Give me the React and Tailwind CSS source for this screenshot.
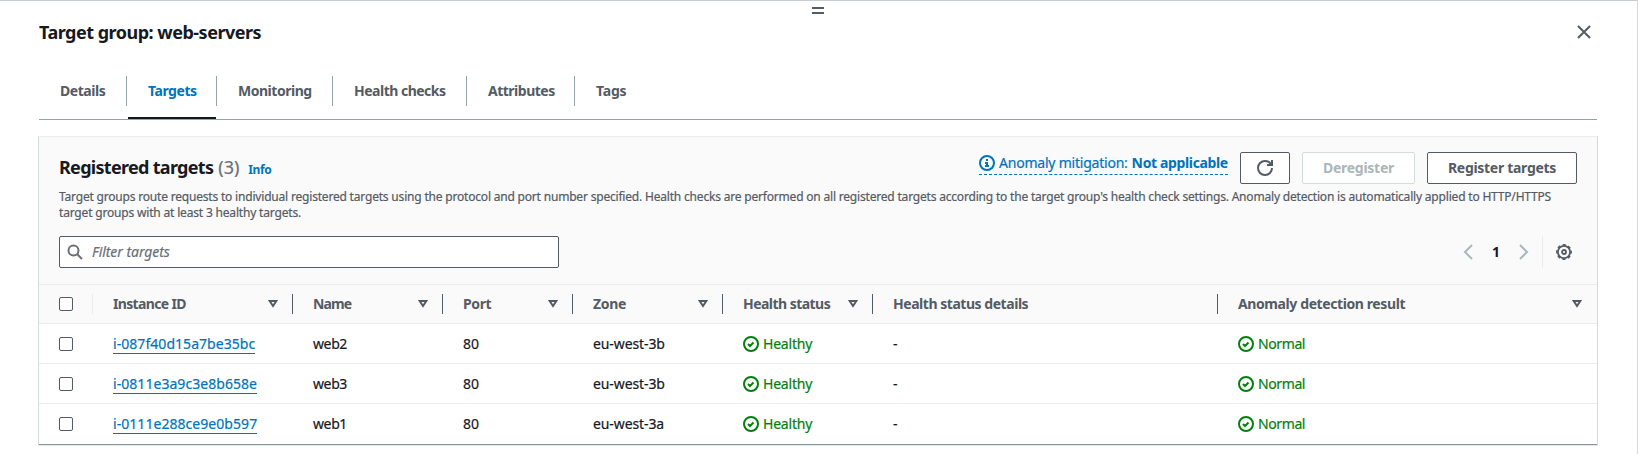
function Icon({ className = '', children }) {
  return (
    <svg viewBox="0 0 16 16" className={`size-4 shrink-0 ${className}`} fill="none" stroke="currentColor" strokeWidth="2" aria-hidden="true">
      {children}
    </svg>
  );
}

const CloseIcon = () => (
  <Icon className="text-[#545b64]">
    <path d="m2 2 12 12M14 2 2 14" />
  </Icon>
);

const RefreshIcon = () => (
  <Icon>
    <path d="M10 5h5V0" />
    <path d="M15 8a6.957 6.957 0 0 1-7 7 6.957 6.957 0 0 1-7-7 6.957 6.957 0 0 1 7-7 6.87 6.87 0 0 1 6.3 4" />
  </Icon>
);

const SearchIcon = () => (
  <Icon className="text-[#687078]">
    <circle cx="6.5" cy="6.5" r="5" />
    <path d="m15 15-5-5" />
  </Icon>
);

const InfoIcon = () => (
  <Icon>
    <circle cx="8" cy="8" r="7" />
    <path d="M8 11V8H6M10 11H6M8 6V4" />
  </Icon>
);

const CheckIcon = () => (
  <Icon>
    <circle cx="8" cy="8" r="7" />
    <path d="m5 8 2 2 3.5-3.5" />
  </Icon>
);

const GearIcon = () => (
  <Icon className="text-[#545b64]">
    <circle cx="8" cy="8" r="6.1" strokeWidth="1.8" />
    <circle cx="8" cy="8" r="7.2" strokeWidth="1.5" strokeDasharray="3.2 2.455" strokeDashoffset="1.6" />
    <circle cx="8" cy="8" r="2" strokeWidth="1.8" />
  </Icon>
);

const SortIcon = () => (
  <Icon className="text-[#545b64]">
    <path d="M4.7 5h6.6L8 10Z" />
  </Icon>
);

const TABS = [
  { label: 'Details', cell: 'w-[88px]', track: 'tracking-[-0.46px]' },
  { label: 'Targets', cell: 'w-[90px]', track: 'tracking-[-0.45px]', active: true },
  { label: 'Monitoring', cell: 'w-[116px]', track: 'tracking-[-0.48px]' },
  { label: 'Health checks', cell: 'w-[134px]', track: 'tracking-[-0.5px]' },
  { label: 'Attributes', cell: 'w-[108px]', track: 'tracking-[-0.5px]' },
  { label: 'Tags', cell: 'w-[75px]', track: 'tracking-[-0.2px]', last: true },
];

const COLUMNS = [
  { label: 'Instance ID', track: 'tracking-[-0.65px]', sortable: true },
  { label: 'Name', track: 'tracking-[-0.85px]', sortable: true },
  { label: 'Port', track: 'tracking-[-0.4px]', sortable: true },
  { label: 'Zone', track: 'tracking-[-0.33px]', sortable: true },
  { label: 'Health status', track: 'tracking-[-0.54px]', sortable: true },
  { label: 'Health status details', track: 'tracking-[-0.46px]' },
  { label: 'Anomaly detection result', track: 'tracking-[-0.4px]', sortable: true, last: true },
];

const ROWS = [
  { id: 'i-087f40d15a7be35bc', name: 'web2', zone: 'eu-west-3b' },
  { id: 'i-0811e3a9c3e8b658e', name: 'web3', zone: 'eu-west-3b' },
  { id: 'i-0111e288ce9e0b597', name: 'web1', zone: 'eu-west-3a' },
];

const GRID = 'grid grid-cols-[54px_200px_150px_130px_150px_150px_345px_1fr] items-center';

const Checkbox = () => (
  <span className="ml-5 block size-[14px] rounded-[2px] border border-[#545b64] bg-white" />
);

function Status({ label, track }) {
  return (
    <div className="flex items-center gap-1 pl-5 text-[#037f0c]">
      <CheckIcon />
      <span className={track}>{label}</span>
    </div>
  );
}

function Tabs() {
  return (
    <nav className="flex h-[53px] w-[1558px] border-b border-[#95a5a6] text-sm leading-[22px] font-bold text-[#545b64]">
      {TABS.map((t) => (
        <div key={t.label} className={`relative flex h-full items-start ${t.cell}`}>
          <div
            className={`mt-[9px] flex h-[30px] w-full items-center pl-[21px] ${t.last ? '' : 'border-r border-[#95a5a6]'} ${t.active ? 'text-[#0073bb]' : ''}`}
          >
            <span className={`whitespace-nowrap ${t.track}`}>{t.label}</span>
          </div>
          {t.active && <span className="absolute bottom-0 left-[1px] h-[2px] w-[88px] bg-[#16191f]" />}
        </div>
      ))}
    </nav>
  );
}

function PanelHeader() {
  return (
    <header className="bg-[#fafafa] px-5">
      <div className="flex h-[47px] items-start justify-between pt-[15px]">
        <h2 className="flex items-baseline pt-1 text-lg leading-[22px] font-bold text-[#16191f]">
          <span className="tracking-[-0.7px]">Registered targets</span>
          <span className="ml-[5px] font-normal text-[#687078] [-webkit-text-stroke:0.2px]">(3)</span>
          <a className="ml-[9px] text-xs font-bold tracking-[-0.4px] text-[#0073bb]">Info</a>
        </h2>
        <div className="flex items-start text-sm font-bold text-[#545b64]">
          <div className="flex h-[23px] w-[249px] items-center border-b border-dashed border-[#0073bb] text-[#0073bb]">
            <InfoIcon />
            <span className="ml-1 font-normal whitespace-nowrap tracking-[-0.22px] [-webkit-text-stroke:0.2px]">Anomaly mitigation:</span>
            <span className="ml-[4px] whitespace-nowrap tracking-[-0.36px]">Not applicable</span>
          </div>
          <button className="ml-3 flex h-8 w-[50px] items-center justify-center rounded-[2px] border border-[#545b64] bg-white">
            <RefreshIcon />
          </button>
          <button className="ml-3 flex h-8 w-[113px] items-center justify-center rounded-[2px] border border-[#d5dbdb] bg-white tracking-[-0.27px] text-[#aab7b8]">
            Deregister
          </button>
          <button className="ml-3 flex h-8 w-[150px] items-center justify-center rounded-[2px] border border-[#545b64] bg-white tracking-[-0.3px]">
            Register targets
          </button>
        </div>
      </div>
      <p className="h-[52px] pt-[5px] text-xs leading-4 text-[#545b64] [-webkit-text-stroke:0.2px]">
        <span className="block whitespace-nowrap tracking-[-0.191px]">
          Target groups route requests to individual registered targets using the protocol and port number specified. Health checks are performed on all registered targets according to the target group's health check settings. Anomaly detection is automatically applied to HTTP/HTTPS
        </span>
        <span className="block whitespace-nowrap tracking-[-0.179px]">target groups with at least 3 healthy targets.</span>
      </p>
      <div className="flex h-12 items-start justify-between">
        <div className="flex h-8 w-[500px] items-center rounded-[2px] border border-[#545b64] bg-white pl-[7px]">
          <SearchIcon />
          <span className="ml-[9px] text-sm tracking-[-0.05px] text-[#687078] italic [-webkit-text-stroke:0.2px]">Filter targets</span>
        </div>
        <div className="flex h-8 items-center pr-[5px] text-sm">
          <Icon className="text-[#aab7b8]">
            <path d="M12 1 5 8l7 7" />
          </Icon>
          <span className="w-10 text-center font-bold text-[#16191f]">1</span>
          <Icon className="text-[#aab7b8]">
            <path d="m4 1 7 7-7 7" />
          </Icon>
          <span className="mr-[13px] ml-[10px] h-8 w-px bg-[#eaeded]" />
          <GearIcon />
        </div>
      </div>
    </header>
  );
}

function TargetsTable() {
  return (
    <div className="text-sm text-[#16191f]">
      <div className={`${GRID} h-10 border-y border-[#eaeded] bg-[#fafafa] font-bold text-[#545b64]`}>
        <div className="flex h-5 items-center border-r border-[#eaeded]">
          <Checkbox />
        </div>
        {COLUMNS.map((c) => (
          <div
            key={c.label}
            className={`flex h-5 items-center justify-between pl-5 ${c.last ? 'pr-[12px]' : 'border-r border-[#545b64] pr-[11px]'}`}
          >
            <span className={`whitespace-nowrap ${c.track}`}>{c.label}</span>
            {c.sortable && <SortIcon />}
          </div>
        ))}
      </div>
      {ROWS.map((r) => (
        <div
          key={r.id}
          className={`${GRID} h-10 border-b border-[#eaeded] [-webkit-text-stroke:0.2px] last:h-[41px] last:border-[#879596] last:pb-px`}
        >
          <Checkbox />
          <div className="pl-5">
            <a className="inline-block h-5 border-b border-[#0073bb] leading-5 tracking-[0.05px] text-[#0073bb]">{r.id}</a>
          </div>
          <div className="pl-5 tracking-[-0.38px]">{r.name}</div>
          <div className="pl-5">80</div>
          <div className="pl-5 tracking-[-0.1px]">{r.zone}</div>
          <Status label="Healthy" track="tracking-[-0.2px]" />
          <div className="pl-5">-</div>
          <Status label="Normal" track="tracking-[-0.4px]" />
        </div>
      ))}
    </div>
  );
}

export default function App() {
  return (
    <div className="flex h-[454px] w-[1639px] pr-px font-['Noto_Sans',sans-serif]">
      <main className="flex w-full flex-col border-t border-r border-[#c6cdd2] border-r-[#d5dbdb] bg-white">
        <div className="flex h-[13px] pt-[6px] pl-[812px]">
          <div className="h-[7px] w-3 border-y-2 border-[#545b64]" />
        </div>
        <div className="flex h-[53px] items-start justify-between pr-[45px] pl-[39px]">
          <h1 className="pt-[6px] text-lg leading-6 font-bold tracking-[-0.5px] text-[#16191f]">Target group: web-servers</h1>
          <button className="mt-[10px]">
            <CloseIcon />
          </button>
        </div>
        <div className="pl-[39px]">
          <Tabs />
        </div>
        <section className="mt-4 ml-[38px] w-[1560px] border border-b-0 border-[#d5dbdb] border-t-[#eaeded] shadow-[0_1px_0_#e3e7e8]">
          <PanelHeader />
          <TargetsTable />
        </section>
      </main>
    </div>
  );
}
